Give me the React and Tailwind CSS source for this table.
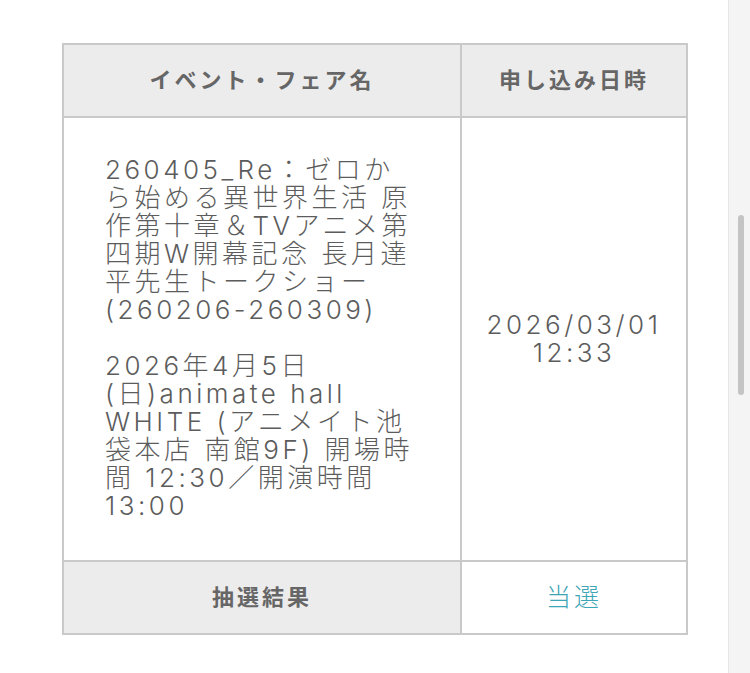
const eventLines = [
  '260405_Re：ゼロか',
  'ら始める異世界生活 原',
  '作第十章＆TVアニメ第',
  '四期W開幕記念 長月達',
  '平先生トークショー',
  '(260206-260309)',
];

const venueLines = [
  '2026年4月5日',
  '(日)animate hall',
  'WHITE (アニメイト池',
  '袋本店 南館9F) 開場時',
  '間 12:30／開演時間',
  '13:00',
];

export default function App() {
  return (
    <div
      className="flex h-[673px] w-[750px] overflow-hidden bg-white text-[#5c5c5c]"
      style={{ fontFamily: 'Inter, "Noto Sans CJK JP", sans-serif' }}
    >
      <main className="flex-1 pl-[62px] pt-[43px]">
        <div className="w-[626px] border-2 border-[#c9c9c9]">
          {/* header */}
          <div className="grid grid-cols-[398px_1fr] border-b-2 border-[#c9c9c9] bg-[#ececec]">
            <div className="flex h-[71px] items-center justify-center border-r-2 border-[#c9c9c9] text-[22px] font-bold tracking-[3px] text-[#666]">
              イベント・フェア名
            </div>
            <div className="flex h-[71px] items-center justify-center text-[22px] font-bold tracking-[3px] text-[#666]">
              申し込み日時
            </div>
          </div>

          {/* body */}
          <div className="grid grid-cols-[398px_1fr] border-b-2 border-[#c9c9c9]">
            <div className="border-r-2 border-[#c9c9c9] pb-[40px] pl-[41px] pt-[38px] text-[26px] font-light leading-[28px] tracking-[3.5px]">
              {eventLines.map((line) => (
                <div key={line} className="whitespace-nowrap">
                  {line}
                </div>
              ))}
              <div className="h-[28px]" />
              {venueLines.map((line) => (
                <div key={line} className="whitespace-nowrap">
                  {line}
                </div>
              ))}
            </div>
            <div className="flex flex-col items-center justify-center text-[26px] font-light leading-[28px] tracking-[3.5px]">
              <div>2026/03/01</div>
              <div>12:33</div>
            </div>
          </div>

          {/* footer */}
          <div className="grid grid-cols-[398px_1fr]">
            <div className="flex h-[71px] items-center justify-center border-r-2 border-[#c9c9c9] bg-[#ececec] text-[22px] font-bold tracking-[3px] text-[#666]">
              抽選結果
            </div>
            <div className="flex h-[71px] items-center justify-center text-[25px] font-light tracking-[3px] text-[#3da5b5]">
              当選
            </div>
          </div>
        </div>
      </main>

      {/* scrollbar */}
      <div className="w-[22px] border-l border-[#e6e6e6] bg-[#f4f4f4] pl-[9px] pt-[215px]">
        <div className="h-[180px] w-[6px] rounded-full bg-[#c4c4c4]" />
      </div>
    </div>
  );
}
